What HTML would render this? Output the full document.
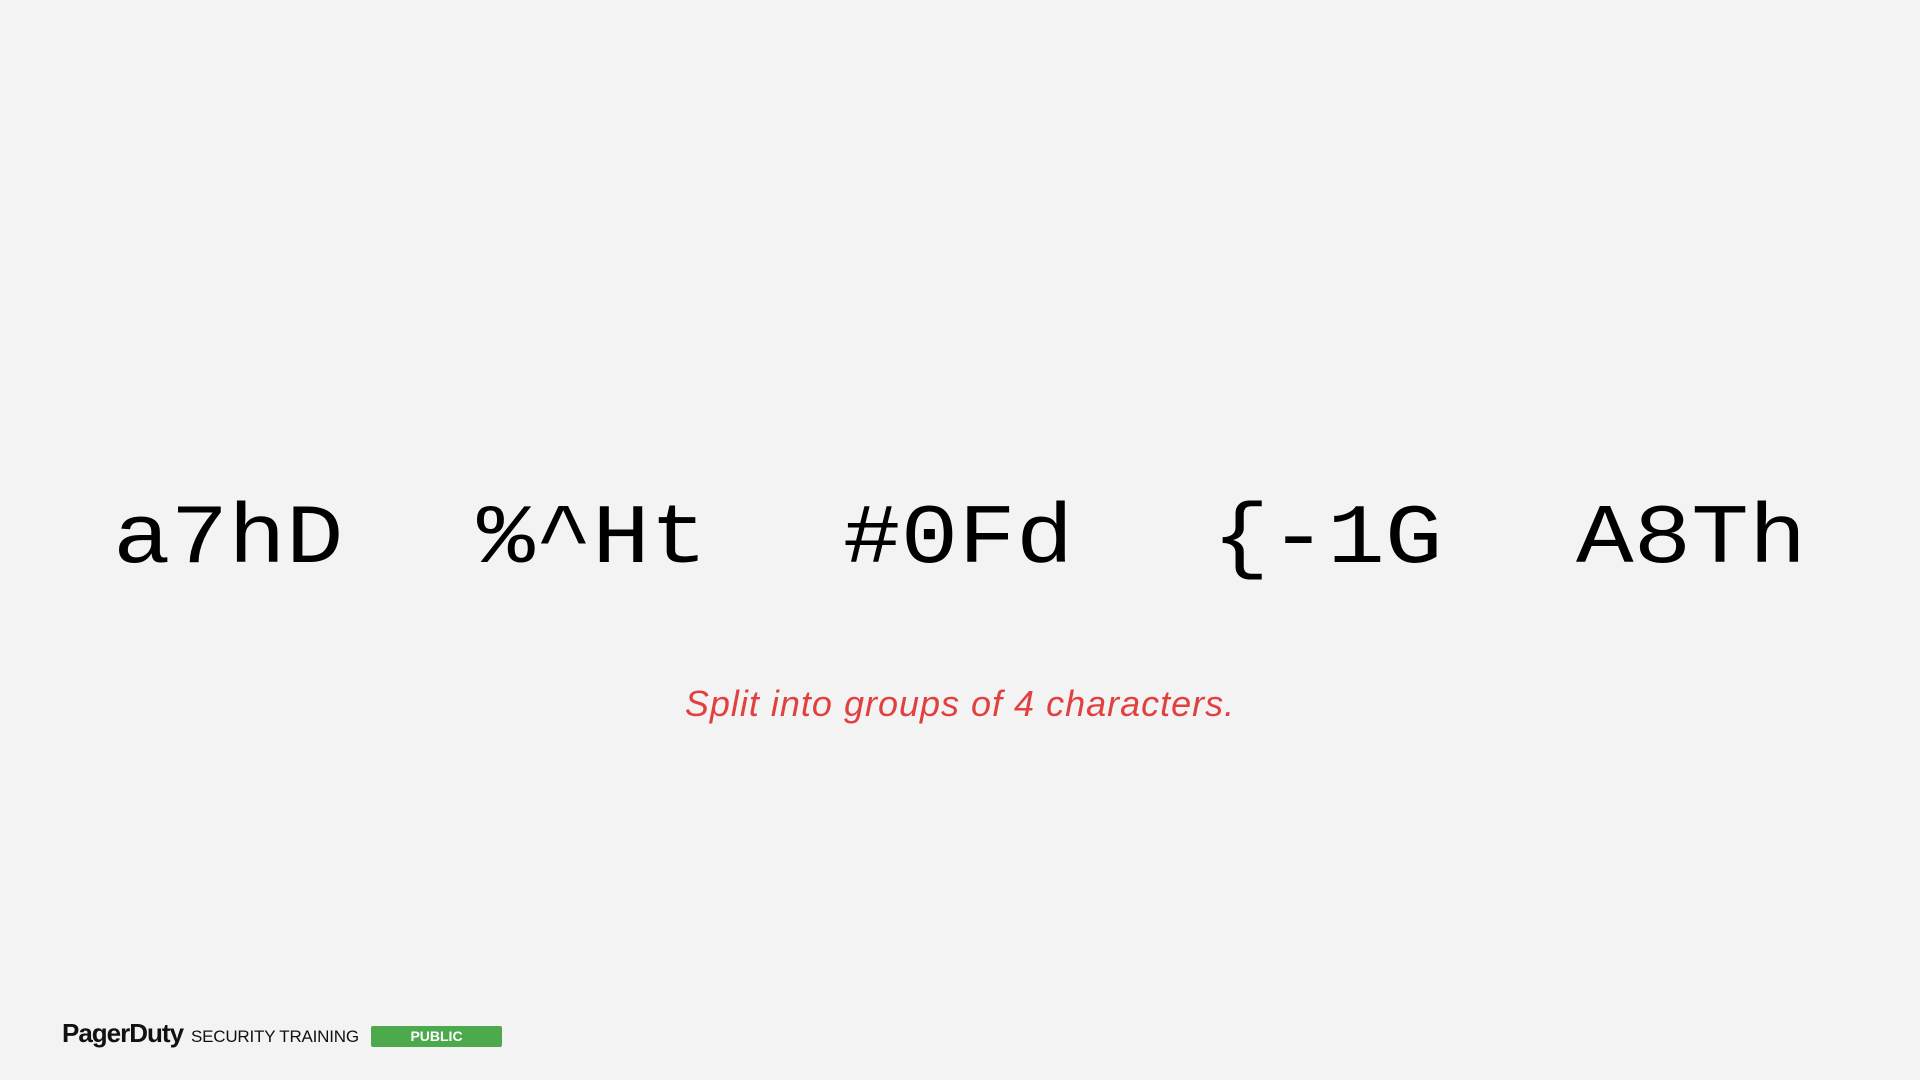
<!DOCTYPE html>
<html><head><style>
html,body{margin:0;padding:0;background:#f3f3f3;width:1920px;height:1080px;overflow:hidden;position:relative}
.code{position:absolute;top:476px;font-family:"Liberation Mono",monospace;font-size:96px;line-height:120px;white-space:pre;color:#000;transform:scaleY(0.88);transform-origin:0 92px}
.note{position:absolute;left:0;width:1920px;top:683px;text-align:center;font-family:"Liberation Sans",sans-serif;font-style:italic;font-size:36px;color:#e23f3f;letter-spacing:1px}
.logo{position:absolute;left:62px;top:1018px;font-family:"Liberation Sans",sans-serif;font-weight:bold;font-size:26px;letter-spacing:-1px;color:#111}
.sec{position:absolute;left:191px;top:1027px;font-family:"Liberation Sans",sans-serif;font-size:17px;letter-spacing:-0.2px;color:#111}
.badge{position:absolute;left:371px;top:1026px;width:131px;height:21px;background:#4caa4c;border-radius:2px;color:#fff;font-family:"Liberation Sans",sans-serif;font-weight:bold;font-size:14px;line-height:21px;text-align:center}
</style></head><body>
<div class="code" style="left:113px">a7hD</div>
<div class="code" style="left:477px">%^Ht</div>
<div class="code" style="left:843px">#0Fd</div>
<div class="code" style="left:1212px">{-1G</div>
<div class="code" style="left:1576px">A8Th</div>
<div class="note">Split into groups of 4 characters.</div>
<div class="logo">PagerDuty</div>
<div class="sec">SECURITY TRAINING</div>
<div class="badge">PUBLIC</div>
</body></html>
